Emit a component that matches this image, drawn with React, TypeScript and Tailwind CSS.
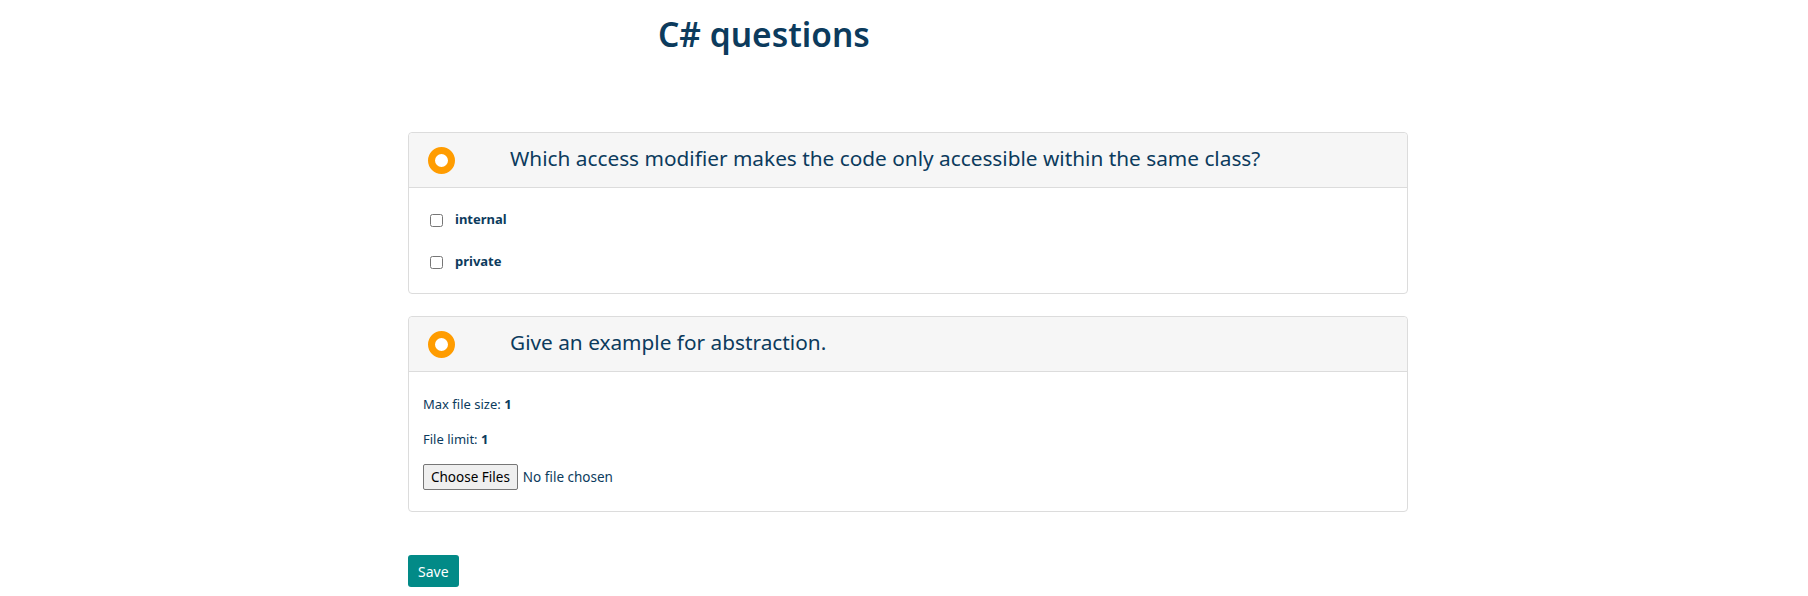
import { useState } from 'react';

const navy = 'text-[#0c3b5d]';

function Ring() {
  return <span className="block w-[27px] h-[27px] rounded-full border-[7px] border-[#ff9c00] bg-white shrink-0" />;
}

function QuestionHeader({ text }: { text: string }) {
  return (
    <div className="flex items-center h-[55px] pl-[19px] bg-[#f6f6f6] border-b border-[#dcdcdc] rounded-t-[4px]">
      <Ring />
      <h5 className={`ml-[55px] pb-[4px] text-[20.8px] leading-[26px] ${navy}`}>{text}</h5>
    </div>
  );
}

export default function App() {
  const [checked, setChecked] = useState<Record<string, boolean>>({});
  const options = ['internal', 'private'];

  return (
    <div className="min-h-screen bg-white pl-[8px]" style={{ fontFamily: '"Noto Sans", "Open Sans", sans-serif' }}>
      <div className="w-[1000px] mx-auto">
        <h1 className={`ml-[250px] mt-[12px] h-[44px] text-[33.5px] leading-[44px] font-semibold ${navy}`}>C# questions</h1>

        <div className="mt-[76px] border border-[#dcdcdc] rounded-[4px]">
          <QuestionHeader text="Which access modifier makes the code only accessible within the same class?" />
          <div className="pt-[11px] pb-[10px] pl-[21px]">
            {options.map((o) => (
              <label key={o} className="flex items-center h-[42px]">
                <input
                  type="checkbox"
                  className="w-[13px] h-[13px] m-0"
                  checked={!!checked[o]}
                  onChange={() => setChecked({ ...checked, [o]: !checked[o] })}
                />
                <span className={`ml-[12px] text-[13px] font-bold ${navy}`}>{o}</span>
              </label>
            ))}
          </div>
        </div>

        <div className="mt-[22px] border border-[#dcdcdc] rounded-[4px]">
          <QuestionHeader text="Give an example for abstraction." />
          <div className={`pt-[22px] pb-[21px] pl-[14px] text-[13px] leading-[20px] ${navy}`}>
            <p>
              Max file size: <b>1</b>
            </p>
            <p className="mt-[15px]">
              File limit: <b>1</b>
            </p>
            <div className="mt-[15px] flex items-center">
              <button className="h-[26px] px-[7px] border border-[#767676] rounded-[2px] bg-[#efefef] text-black text-[13.5px]">
                Choose Files
              </button>
              <span className="ml-[5px] text-[13.5px]">No file chosen</span>
            </div>
          </div>
        </div>

        <button className="mt-[43px] h-[32px] px-[10px] rounded-[3px] bg-[#028a87] text-white text-[14px]">Save</button>
      </div>
    </div>
  );
}
